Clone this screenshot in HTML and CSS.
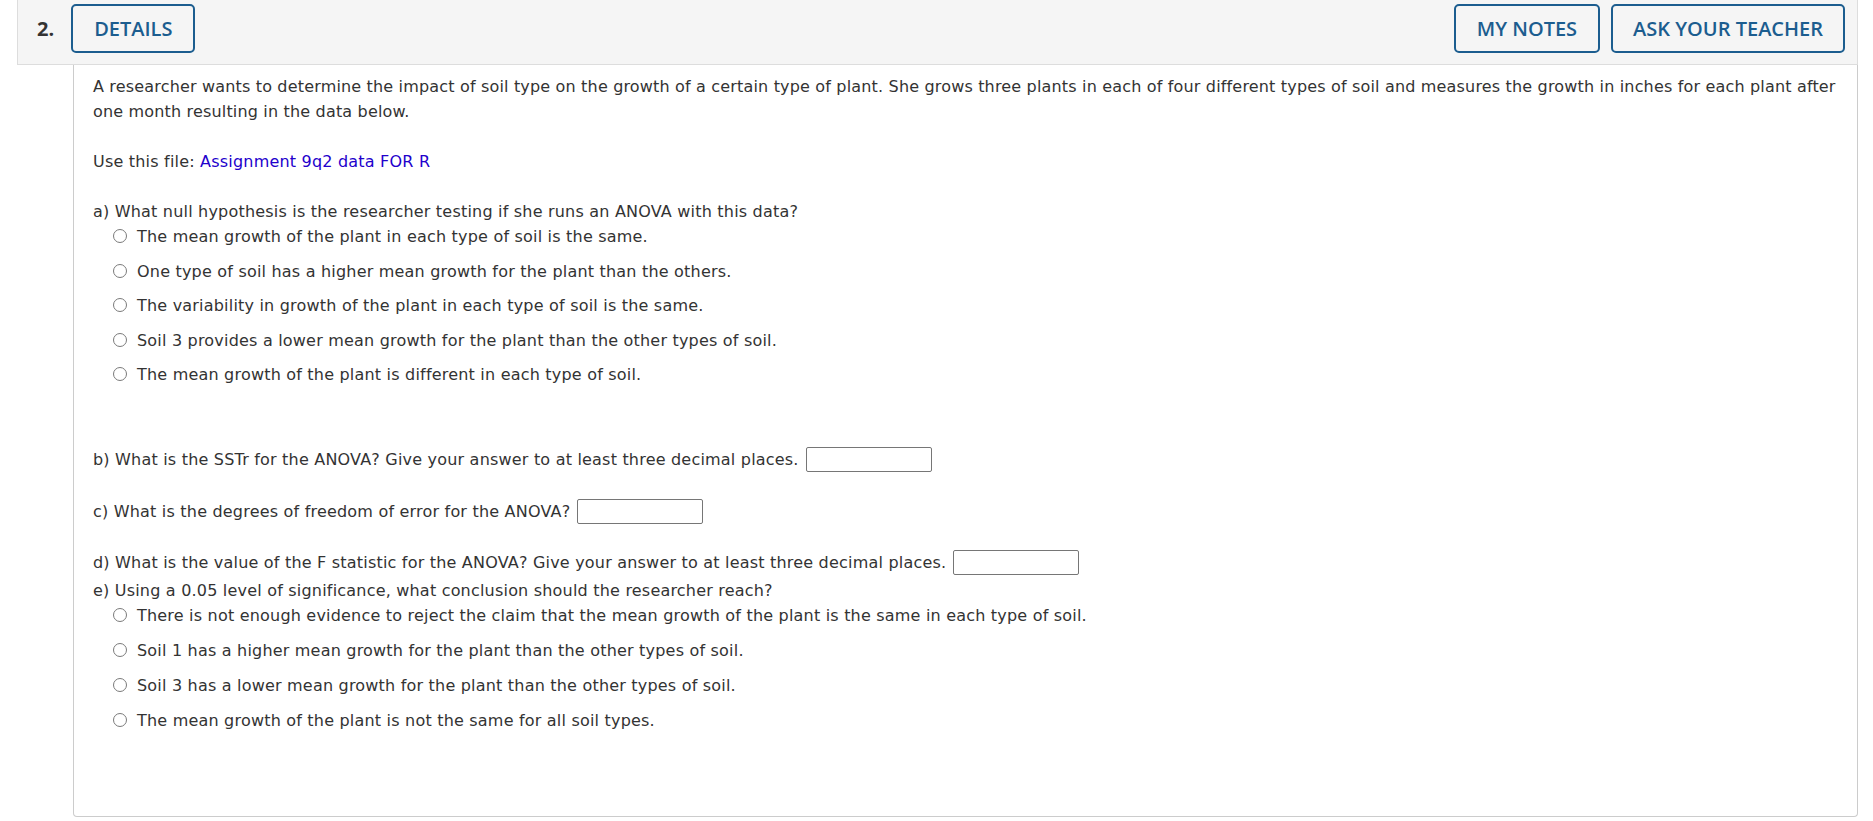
FILE: index.html
```html
<!DOCTYPE html>
<html lang="en">
<head>
<meta charset="utf-8">
<title>Question 2</title>
<link rel="stylesheet" href="styles.css">
</head>
<body>
<div class="question">
  <div class="q-header">
    <span class="q-num">2.</span>
    <button class="btn btn-details">DETAILS</button>
    <div class="spacer"></div>
    <button class="btn btn-notes">MY NOTES</button>
    <button class="btn btn-ask">ASK YOUR TEACHER</button>
  </div>
  <div class="q-body">
    <p class="intro">A researcher wants to determine the impact of soil type on the growth of a certain type of plant. She grows three plants in each of four different types of soil and measures the growth in inches for each plant after one month resulting in the data below.</p>
    <p class="file">Use this file: <a href="#" class="file-link">Assignment 9q2 data FOR R</a></p>

    <div class="prompt part-a">a) What null hypothesis is the researcher testing if she runs an ANOVA with this data?</div>
    <ul class="choices choices-a">
      <li><span class="radio"></span>The mean growth of the plant in each type of soil is the same.</li>
      <li><span class="radio"></span>One type of soil has a higher mean growth for the plant than the others.</li>
      <li><span class="radio"></span>The variability in growth of the plant in each type of soil is the same.</li>
      <li><span class="radio"></span>Soil 3 provides a lower mean growth for the plant than the other types of soil.</li>
      <li><span class="radio"></span>The mean growth of the plant is different in each type of soil.</li>
    </ul>

    <div class="fill part-b"><span>b) What is the SSTr for the ANOVA? Give your answer to at least three decimal places.</span><span class="answer"></span></div>
    <div class="fill part-c"><span>c) What is the degrees of freedom of error for the ANOVA?</span><span class="answer"></span></div>
    <div class="fill part-d"><span>d) What is the value of the F statistic for the ANOVA? Give your answer to at least three decimal places.</span><span class="answer"></span></div>

    <div class="prompt part-e">e) Using a 0.05 level of significance, what conclusion should the researcher reach?</div>
    <ul class="choices choices-e">
      <li><span class="radio"></span>There is not enough evidence to reject the claim that the mean growth of the plant is the same in each type of soil.</li>
      <li><span class="radio"></span>Soil 1 has a higher mean growth for the plant than the other types of soil.</li>
      <li><span class="radio"></span>Soil 3 has a lower mean growth for the plant than the other types of soil.</li>
      <li><span class="radio"></span>The mean growth of the plant is not the same for all soil types.</li>
    </ul>
  </div>
</div>
</body>
</html>
```
FILE: styles.css
```css
html, body {
  margin: 0;
  padding: 0;
  background: #ffffff;
}

body {
  font-family: "DejaVu Sans", Verdana, sans-serif;
  font-size: 16px;
  letter-spacing: 0.2px;
  color: #333333;
}

.question {
  padding: 0 15px 0 17px;
}

.q-header {
  display: flex;
  align-items: flex-start;
  box-sizing: border-box;
  height: 65px;
  padding: 4px 12px 0 19px;
  background: #f5f5f5;
  border: 1px solid #dddddd;
  border-top: none;
  letter-spacing: 0;
}

.q-num {
  font-family: "Open Sans", "Liberation Sans", sans-serif;
  font-weight: 700;
  font-size: 20px;
  line-height: 49px;
  color: #333333;
  margin-right: 17px;
}

.spacer {
  flex: 1;
}

.btn {
  box-sizing: border-box;
  height: 49px;
  padding: 0 21px;
  border: 2px solid #1c5d8f;
  border-radius: 5px;
  background: transparent;
  color: #1c5d8f;
  font-family: "Open Sans", "Liberation Sans", sans-serif;
  font-weight: 600;
  font-size: 20px;
  line-height: 45px;
}

.btn-ask {
  padding: 0 20px;
}

.btn-notes {
  margin-right: 11px;
}

.q-body {
  margin-left: 56px;
  border: 1px solid #cccccc;
  border-top: none;
  border-radius: 0 0 4px 4px;
  padding: 9px 19px 83px 19px;
  line-height: 25px;
}

.intro {
  margin: 0;
  letter-spacing: 0.17px;
}

.file {
  margin: 25px 0 0 0;
}

.file-link {
  color: #2200cc;
  text-decoration: none;
}

.part-a {
  margin-top: 25px;
}

.part-e {
  margin-top: 2.5px;
}

.choices {
  list-style: none;
  margin: 0;
  padding: 0 0 0 20px;
}

.choices-a li {
  margin-bottom: 9.5px;
}

.choices-e li {
  margin-bottom: 10px;
}

.choices li:last-child {
  margin-bottom: 0;
}

.radio {
  display: inline-block;
  box-sizing: border-box;
  width: 14px;
  height: 14px;
  border: 1.5px solid #7a7a7a;
  border-radius: 50%;
  background: #ffffff;
  vertical-align: -1px;
  margin-right: 10px;
}

.fill {
  display: flex;
  align-items: center;
  height: 25px;
}

.part-b {
  margin-top: 60px;
}

.part-c {
  margin-top: 26.5px;
}

.part-d {
  margin-top: 26.5px;
}

.answer {
  display: inline-block;
  box-sizing: border-box;
  width: 126px;
  height: 25px;
  margin-left: 7px;
  border: 1px solid #767676;
  border-radius: 2px;
  background: #ffffff;
}
```
